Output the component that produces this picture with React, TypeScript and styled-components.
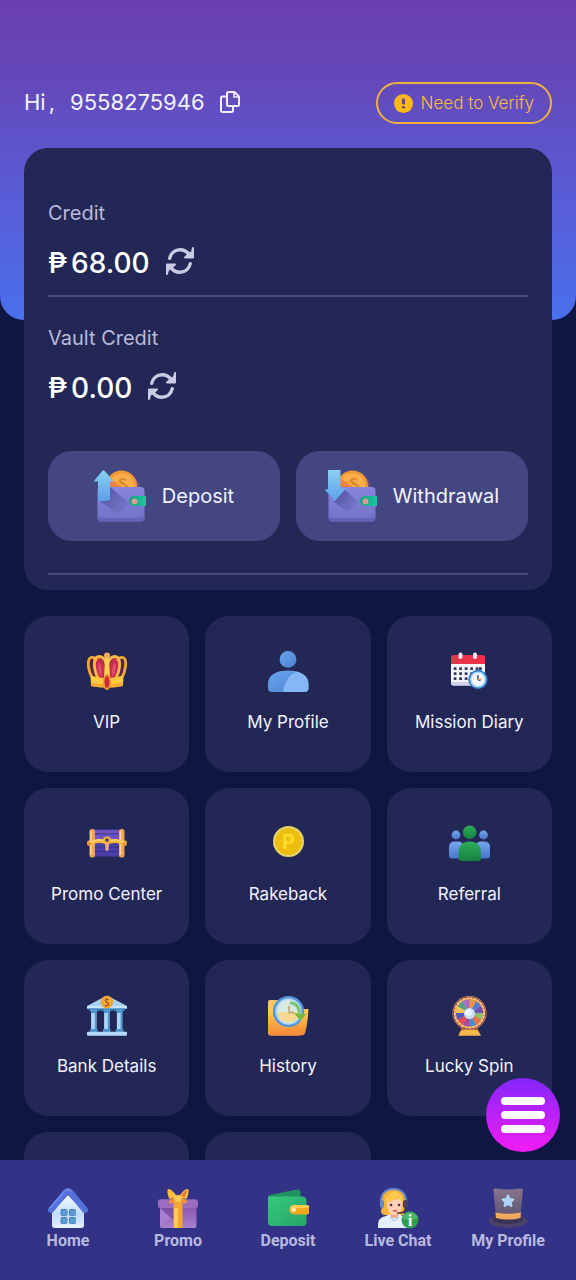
import React from "react";
import styled, { createGlobalStyle } from "styled-components";

const GlobalStyle = createGlobalStyle`
  * { box-sizing: border-box; }
  body {
    margin: 0;
    background: #101642;
    color: #f2f3fd;
    font-family: Inter, "Liberation Sans", sans-serif;
  }
  button { font: inherit; color: inherit; border: 0; background: none; padding: 0; cursor: pointer; }
  a { color: inherit; text-decoration: none; }
  svg { display: block; flex: none; overflow: visible; }
`;

const Shell = styled.div`
  display: flex;
  flex-direction: column;
  height: 100vh;
  position: relative;
`;

const Scroll = styled.main`
  flex: 1;
  min-height: 0;
  overflow-y: auto;
  scrollbar-width: none;
`;

const Hero = styled.header`
  display: flex;
  align-items: flex-start;
  justify-content: space-between;
  padding: 82px 24px 196px;
  border-radius: 0 0 24px 24px;
  background: linear-gradient(180deg, #6b3eb0 0%, #6449ba 26%, #5b59d2 55%, #4a70ec 100%);
`;

const Greeting = styled.div`
  display: flex;
  align-items: center;
  height: 40px;
  gap: 15px;
  font-size: 22px;
  line-height: 28px;
  white-space: nowrap;
`;

const Salutation = styled.span`
  display: flex;
  gap: 3px;
`;

const VerifyButton = styled.button`
  display: flex;
  align-items: center;
  gap: 8px;
  height: 42px;
  padding: 0 16px;
  border: 2px solid #f0b040;
  border-radius: 21px;
  color: #fcbc3c;
  font-size: 17px;
  font-weight: 300;
  line-height: 24px;
  white-space: nowrap;
`;

const Wallet = styled.section`
  position: relative;
  margin: -172px 24px 0;
  padding: 52px 24px 15px;
  border-radius: 24px;
  background: #232755;
`;

const Balance = styled.div`
  display: flex;
  flex-direction: column;
  gap: 16px;
`;

const BalanceLabel = styled.span`
  color: #b9badb;
  font-size: 20px;
  line-height: 26px;
`;

const Amount = styled.div`
  display: flex;
  align-items: center;
  gap: 16px;
  color: #ffffff;
  font-size: 28px;
  font-weight: 500;
  line-height: 42px;
`;

const Money = styled.span`
  display: flex;
  gap: 4px;
`;

const RefreshButton = styled.button`
  margin-bottom: 4px;
`;

const Rule = styled.hr<{ $after?: number }>`
  height: 2px;
  margin: 11px 0 ${(p) => p.$after ?? 0}px;
  border: 0;
  background: #464a7d;
`;

const Actions = styled.div`
  display: grid;
  grid-template-columns: 1fr 1fr;
  gap: 16px;
  margin: 42px 0 32px;
`;

const ActionButton = styled.button`
  display: flex;
  align-items: center;
  justify-content: center;
  gap: 16px;
  height: 90px;
  border-radius: 24px;
  background: #434681;
  font-size: 20px;
  line-height: 26px;
`;

const TileGrid = styled.nav`
  display: grid;
  grid-template-columns: repeat(3, 1fr);
  gap: 16px;
  padding: 26px 24px 24px;
`;

const Tile = styled.a`
  display: flex;
  flex-direction: column;
  align-items: center;
  gap: 19px;
  height: 156px;
  padding-top: 35px;
  border-radius: 24px;
  background: #232755;
  font-size: 17px;
  line-height: 24px;
  white-space: nowrap;
`;

const BottomNav = styled.nav`
  display: flex;
  height: 120px;
  padding: 28px 13px 0;
  background: #323386;
`;

const NavLink = styled.a`
  flex: 1;
  display: flex;
  flex-direction: column;
  align-items: center;
  gap: 3px;
  color: #b9b9e0;
  font-family: Roboto, sans-serif;
  font-size: 16px;
  font-weight: 700;
  line-height: 20px;
  white-space: nowrap;
`;

const MenuButton = styled.button`
  position: absolute;
  right: 16px;
  bottom: 128px;
  display: flex;
  flex-direction: column;
  align-items: center;
  justify-content: center;
  gap: 6px;
  width: 74px;
  height: 74px;
  border-radius: 50%;
  background: linear-gradient(180deg, #8426fb 0%, #f41cf4 100%);
`;

const Bar = styled.span`
  width: 44px;
  height: 8px;
  border-radius: 4px;
  background: #ffffff;
`;

const Icon40 = ({ children }: { children: React.ReactNode }) => (
  <svg width="40" height="40" viewBox="0 0 40 40" aria-hidden="true">{children}</svg>
);

const CopyIcon = () => (
  <svg width="20" height="22" viewBox="0 0 20 22" fill="none" stroke="#f1effc" strokeWidth="2" strokeLinejoin="round" aria-hidden="true">
    <path d="M8.500 1h6l4.500 4.500V13.500a1.500 1.500 0 0 1-1.500 1.500h-9A1.500 1.500 0 0 1 7 13.500V2.500A1.500 1.500 0 0 1 8.500 1Z" />
    <path d="M14 1.500V6h4.500" strokeWidth="1.600" />
    <path d="M7 5.500H2.500A1.500 1.500 0 0 0 1 7v12.500A1.500 1.500 0 0 0 2.500 21h9a1.500 1.500 0 0 0 1.500-1.500V15" />
  </svg>
);

const AlertIcon = () => (
  <svg width="19" height="19" viewBox="0 0 19 19" aria-hidden="true">
    <circle cx="9.500" cy="9.500" r="9.500" fill="#fdb913" />
    <rect x="8" y="4.500" width="3" height="6" rx="1" fill="#6a4a84" />
    <rect x="8" y="12" width="3" height="2.600" rx="1" fill="#6a4a84" />
  </svg>
);

const RefreshIcon = () => (
  <svg width="28" height="28" viewBox="0 0 28 28" fill="none" aria-hidden="true">
    <g stroke="#c9cae4" strokeWidth="3.400" strokeLinecap="round">
      <path d="M3.700 11.300C5 6 9 2.700 14 2.700c4 0 7 1.800 9 4.800" />
      <path d="M24.300 16.700C23 22 19 25.300 14 25.300c-4 0-7-1.800-9-4.800" />
    </g>
    <g fill="#c9cae4" stroke="#c9cae4" strokeWidth="2" strokeLinejoin="round">
      <path d="M27 1v9.500H19l4-3.500 3-2Z" />
      <path d="M1 27V17.500H9l-4 3.500-3 2Z" />
    </g>
  </svg>
);

const WalletIcon = ({ down }: { down?: boolean }) => {
  const id = down ? "wd" : "dp";
  return (
    <svg width="52" height="52" viewBox="0 0 52 52" aria-hidden="true">
      <defs>
        <linearGradient id={`${id}w`} x1="0" y1="0" x2="0" y2="1"><stop offset="0" stopColor="#8785dc" /><stop offset="1" stopColor="#7272c8" /></linearGradient>
        <linearGradient id={`${id}a`} x1="0" y1="0" x2="0" y2="1"><stop offset="0" stopColor="#8ad0f2" /><stop offset="1" stopColor="#5ba0e8" /></linearGradient>
        <linearGradient id={`${id}s`} x1="0" y1="0" x2="1" y2="1"><stop offset="0" stopColor="#41428c" stopOpacity=".9" /><stop offset="1" stopColor="#55559f" stopOpacity="0" /></linearGradient>
        <linearGradient id={`${id}g`} x1="0" y1="0" x2="1" y2="0"><stop offset="0" stopColor="#15a07c" /><stop offset="1" stopColor="#1cc79c" /></linearGradient>
      </defs>
      <path d="M38 6q7 2 7.500 12H36Z" fill="#7a4d83" />
      <circle cx="27.500" cy="16" r="15.500" fill="#f19a33" />
      <circle cx="27.500" cy="16" r="12.800" fill="#fbae49" />
      <path d="M15 8a15.500 15.500 0 0 0-2 10h17Z" fill="#ed7540" opacity=".8" />
      <path d="M32 10c-3-2-7-1-6 2s6 2 6 5M25 10l9 7" fill="none" stroke="#d98a2e" strokeWidth="1.600" />
      <rect x="3.500" y="17" width="47" height="34.500" rx="4" fill={`url(#${id}w)`} />
      <path d={down ? "M9 32 19 19 34 33l-12 9Z" : "M4 30 16 17 36 34l-12 10Z"} fill={`url(#${id}s)`} />
      <path d="M3.500 43q0 5 5 5h37q5 0 5-5v4.500a4 4 0 0 1-4 4h-39a4 4 0 0 1-4-4Z" fill="#6564b4" />
      <path d="M40 26h12v10H40a5 5 0 0 1 0-10Z" fill={`url(#${id}g)`} />
      <circle cx="40.500" cy="31.500" r="3" fill="#d99a96" />
      {down
        ? <path d="M3 0H15.500v18.500H21L10 31 0 20l3-1Z" fill={`url(#${id}a)`} />
        : <path d="M8.500 .8q1-1.200 2 0L19 10.500q.6 1-.6 1H16V30q-6 1.500-12 1V11.500H.8q-1.300 0-.5-1Z" fill={`url(#${id}a)`} />}
    </svg>
  );
};

const CrownIcon = () => (
  <Icon40>
    <path d="M5 27C0 19 0 10 3 8h34c3 2 3 11-2 19Z" fill="#5a2340" />
    <path d="M11 27C6 16 7 7 12 7c4 0 6 6 6.500 20Zm18 0C34 16 33 7 28 7c-4 0-6 6-6.500 20Z" fill="#c92c52" />
    <path d="M12 11c-2 5 0 11 2 15 2-5 1-11-2-15Zm16 0c2 5 0 11-2 15-2-5-1-11 2-15Z" fill="#e24a66" />
    <g fill="none" stroke="#f0a835" strokeWidth="2.800" strokeLinecap="round">
      <path d="M5.500 27C1 20-.5 8 4 6.500c2-.5 4 .5 5 2.500" />
      <path d="M34.500 27C39 20 40.500 8 36 6.500c-2-.5-4 .5-5 2.500" />
      <path d="M11 27C6 17 6 6 12 5.500c3.500 0 6 3 7 7" stroke="#f7bb45" />
      <path d="M29 27C34 17 34 6 28 5.500c-3.500 0-6 3-7 7" stroke="#f7bb45" />
    </g>
    <path d="M18 5h4l1 22h-6Z" fill="#ffcd50" />
    <circle cx="20" cy="4.500" r="3" fill="#edac5e" />
    <path d="M3.500 24.500q16.500 5 33 0l-.5 10.500q-16 3-32 0Z" fill="#fccb3d" />
    <path d="M4 31.500q16 4 32 0v3.500q-16 3-32 0Z" fill="#f5ab2f" />
    <ellipse cx="20" cy="31" rx="4" ry="8" fill="#e99b32" />
    <ellipse cx="20" cy="31" rx="2.500" ry="6" fill="#d02a38" />
  </Icon40>
);

const UserIcon = () => (
  <Icon40>
    <defs><linearGradient id="us" x1="0" y1="0" x2="1" y2="1"><stop offset="0" stopColor="#68a6ee" /><stop offset="1" stopColor="#4a80cc" /></linearGradient></defs>
    <circle cx="20" cy="8.400" r="8.400" fill="url(#us)" />
    <path d="M0 33C0 24 8 19.500 20 19.500S40.500 24 40.500 33v4q0 4-4 4H4q-4 0-4-4Z" fill="url(#us)" />
    <path d="M15 41c1-11 8-19 14-20.300C36 22.500 40.500 27 40.500 33v4q0 4-4 4Z" fill="#84b7f6" />
  </Icon40>
);

const CalendarIcon = () => (
  <Icon40>
    <rect x="2" y="10" width="34" height="24.500" rx="2.500" fill="#f5f6fc" />
    <path d="M2 13V6.500q0-2.500 2.500-2.500h29q2.500 0 2.500 2.500V13Z" fill="#e83349" />
    <path d="M2 31v1q0 2.500 2.500 2.500h29V31Z" fill="#cfd3ea" />
    {[17.500, 22.500, 27.500].map((y) => [6, 11.500, 17, 22.500, 28].map((x) => (
      <rect key={`${x}-${y}`} x={x - 1.300} y={y - 1.300} width="2.800" height="2.800" rx=".6" fill="#34385f" />
    )))}
    <rect x="30" y="16.200" width="2.800" height="2.800" fill="#34385f" />
    <rect x="9.500" y="1.500" width="4" height="6.500" rx="2" fill="#eceaf8" />
    <rect x="24" y="1.500" width="4" height="6.500" rx="2" fill="#eceaf8" />
    <circle cx="29" cy="28.500" r="9.700" fill="#2f7dc7" />
    <circle cx="29" cy="28.500" r="8" fill="#a9d7f8" />
    <circle cx="29" cy="28.500" r="6.500" fill="#f3f7ff" />
    <path d="M29 24v4.500l2.500 1" fill="none" stroke="#3c4468" strokeWidth="1.400" />
    <path d="m29 28.500 3.500-.5" stroke="#eea04a" strokeWidth="1.400" />
  </Icon40>
);

const ChestIcon = () => (
  <Icon40>
    <rect x="4" y="6.500" width="32" height="27" rx="2" fill="#4a3fa6" />
    <rect x="8" y="7" width="24" height="9" fill="#6f52c2" />
    <path d="M8 11h24M8 24h24M8 28.500h24" stroke="#373489" strokeWidth="1.200" />
    <rect x="2.500" y="6" width="5.500" height="28.500" rx="2.500" fill="#efa453" />
    <rect x="32" y="6" width="5.500" height="28.500" rx="2.500" fill="#efa453" />
    <path d="M4 8v24M33.500 8v24" stroke="#ffd59a" strokeWidth="1.500" />
    <path d="M2 19.500H6q3-2 7-1.500 7 1.500 14 0 4-.5 7 1.500h4" fill="none" stroke="#f4b53d" strokeWidth="4" strokeLinecap="round" />
    <path d="M3 18.500h3q3-2 7-1.500 7 1.500 14 0 4-.5 7 1.500h3" fill="none" stroke="#ffd879" strokeWidth="1.500" />
    <circle cx="2" cy="21" r="2" fill="#e7943c" /><circle cx="38" cy="21" r="2" fill="#e7943c" />
    <circle cx="20" cy="17.500" r="4" fill="#f4b53d" />
    <circle cx="20" cy="17" r="1.800" fill="#563873" />
    <path d="M18 20h4l-.5 7q-1.500 2-3 0Z" fill="#efac85" />
  </Icon40>
);

const CoinIcon = () => (
  <Icon40>
    <circle cx="20.500" cy="18.500" r="15.500" fill="#e5d36a" />
    <circle cx="20.500" cy="18.500" r="13.300" fill="#edbd10" />
    <text x="20.500" y="26" textAnchor="middle" fontFamily="Inter, sans-serif" fontSize="20" fontWeight="700" fill="#ffdc25">P</text>
  </Icon40>
);

const PeopleIcon = () => (
  <Icon40>
    <defs>
      <linearGradient id="pb" x1="0" y1="0" x2="0" y2="1"><stop offset="0" stopColor="#75a7ee" /><stop offset="1" stopColor="#4775cb" /></linearGradient>
      <linearGradient id="pg" x1="0" y1="0" x2="0" y2="1"><stop offset="0" stopColor="#2eae5a" /><stop offset="1" stopColor="#17803f" /></linearGradient>
    </defs>
    <g fill="url(#pb)">
      <circle cx="7" cy="12" r="4.400" /><circle cx="34.500" cy="12" r="4.400" />
      <path d="M0 24q0-5.500 6-5.500h4q4 0 4 5.500v11.500H3q-3 0-3-3Zm27 0q0-5.500 5-5.500h3q6 0 6 5.500v8.500q0 3-3 3H27Z" />
    </g>
    <circle cx="20.700" cy="9.200" r="6.700" fill="url(#pg)" />
    <path d="M9.500 30q0-11.500 11.200-11.500T32 30v5q0 3-3 3H12.500q-3 0-3-3Z" fill="url(#pg)" />
  </Icon40>
);

const BankIcon = () => (
  <Icon40>
    <path d="M18 1.500 0 11v2.500h40V11L22 1.500Q20 0 18 1.500Z" fill="#a9d3f6" />
    <path d="M0 11h40v2.500q-20 1-40 0Z" fill="#c8e5fb" />
    <path d="M2 13.500h36V16H2Z" fill="#2c72ad" />
    <circle cx="20" cy="7" r="6.300" fill="#f2a02d" /><circle cx="20" cy="7" r="4" fill="#f6b13e" />
    <path d="M21.500 4.800c-2-1.300-4 0-2.500 1.700s3.500 1.800 2 3.300-3 .3-3 .3" fill="none" stroke="#a04b1d" strokeWidth="1.400" />
    {[6.800, 19.800, 32.600].map((x) => (
      <g key={x}>
        <rect x={x - 2.700} y="17" width="5.400" height="18" fill="#abd8f8" />
        <rect x={x + 1} y="17" width="1.700" height="18" fill="#5795cd" />
        <path d={`M${x - 4.200} 13.500h8.400l-1.500 4.500h-5.400Z`} fill="#5196ce" />
        <rect x={x - 4} y="34" width="8" height="3" rx="1" fill="#4b8fc8" />
      </g>
    ))}
    <rect x="0" y="36.700" width="40" height="4" rx="1" fill="#b3daf8" />
  </Icon40>
);

const HistoryIcon = () => (
  <Icon40>
    <defs><linearGradient id="hf" x1="0" y1="0" x2="0" y2="1"><stop offset="0" stopColor="#ffce55" /><stop offset="1" stopColor="#f38738" /></linearGradient></defs>
    <path d="M0 7q0-2 2-2h9l3 5h17v30.500H3q-3 0-3-3Z" fill="#ffc85a" />
    <path d="M0 19q12-5 40.500-5-1 16-3.500 24-.8 2.500-4 2.500H3q-3 0-3-3Z" fill="url(#hf)" />
    <circle cx="20.500" cy="16.500" r="14" fill="#d8e9de" />
    <path d="M8 18q12-2 25 0a13 13 0 0 1-25 0Z" fill="#f4da91" />
    <circle cx="20.500" cy="16.500" r="14.300" fill="none" stroke="#5593db" strokeWidth="2.600" />
    <circle cx="20.500" cy="16.500" r="12.200" fill="none" stroke="#acd8f7" strokeWidth="1.600" />
    <path d="M21 11v6.500h5" fill="none" stroke="#bd9d68" strokeWidth="1.400" />
    <path d="M22 8c6 0 9 4 9.500 10" fill="none" stroke="#7bc579" strokeWidth="3" />
    <path d="m26 18 12 1-5.500 7Z" fill="#74bb40" />
  </Icon40>
);

const wheelColors = ["#f19541", "#547bd7", "#7250b0", "#8bc16b", "#ec6f4a", "#438fce", "#a54ba0", "#e04f55", "#5259bd", "#f2c552", "#52a28f", "#a96bc7"];
const WheelIcon = () => (
  <Icon40>
    <path d="M13 31h15l2 6H11Z" fill="#bc5726" />
    <path d="M11 37q1-2 3-2h13q2 0 3 2l2 3.800H9.300Z" fill="#f6b84a" />
    <circle cx="20.500" cy="18" r="17" fill="#ef9f58" />
    <circle cx="20.500" cy="18" r="16.200" fill="none" stroke="#804353" strokeWidth="1" />
    <circle cx="20.500" cy="18" r="14.800" fill="none" stroke="#ffe3ad" strokeWidth="1.400" strokeDasharray="1.500 2.200" />
    {wheelColors.map((c, i) => {
      const a = (i * Math.PI) / 6;
      const b = ((i + 1) * Math.PI) / 6;
      return <path key={c} fill={c} d={`M20.500 18L${20.5 + 13.500 * Math.sin(a)} ${18 - 13.500 * Math.cos(a)}A13.500 13.500 0 0 1 ${20.5 + 13.500 * Math.sin(b)} ${18 - 13.500 * Math.cos(b)}Z`} />;
    })}
    <circle cx="20.500" cy="18.500" r="5.500" fill="#c8ddf6" />
    <circle cx="19.500" cy="17.500" r="3.500" fill="#eaf3ff" />
  </Icon40>
);

const HomeIcon = () => (
  <Icon40>
    <defs><linearGradient id="hm" x1="0" y1="0" x2="0" y2="1"><stop offset="0" stopColor="#f5faff" /><stop offset=".6" stopColor="#bfdcff" /><stop offset="1" stopColor="#eaf2ff" /></linearGradient></defs>
    <path d="M20 7 4 24v13q0 3 3 3h26q3 0 3-3V24Z" fill="url(#hm)" />
    <path d="M3 22 17.500 4.500Q20 2 22.500 4.500L37 22" fill="none" stroke="#5471dc" strokeWidth="6" strokeLinecap="round" strokeLinejoin="round" />
    <path d="M2 20 17 3Q20 .5 23 3" fill="none" stroke="#708df0" strokeWidth="1.500" strokeLinecap="round" />
    {[[12.500, 21], [21, 21], [12.500, 29], [21, 29]].map(([x, y]) => (
      <g key={`${x}${y}`}><rect x={x} y={y} width="7" height="7" rx="2" fill="#427dbb" /><rect x={x + 1} y={y + 1} width="6" height="5.500" rx="1.500" fill="#5c9bd3" /></g>
    ))}
  </Icon40>
);

const GiftIcon = () => (
  <Icon40>
    <defs><linearGradient id="gf" x1="0" y1="0" x2="0" y2="1"><stop offset="0" stopColor="#8452a8" /><stop offset="1" stopColor="#a981cf" /></linearGradient></defs>
    <rect x="2" y="17" width="36.500" height="23" rx="2" fill="url(#gf)" />
    <path d="M2 20h22L15.500 32Z" fill="#6b4399" opacity=".5" />
    <path d="M2 20v19L13 30Z" fill="#a87cce" />
    <rect x="0" y="11.200" width="40" height="8.800" rx="2.500" fill="#9b6cc0" />
    <rect x="15.500" y="12" width="9" height="28" fill="#f3a632" />
    <rect x="16" y="20" width="4" height="20" fill="#ffcb55" />
    <path d="M19 9C16 3 10-1 9.500 2s1 7 2 9c2-1 5-1 8-1ZM21 9c3-6 9-10 9.500-7s-1 7-2 9c-2-1-5-1-8-1Z" fill="#ffbd3e" />
    <path d="M18 10c-4 0-7 2-7 4s3 1 4 1l4-3Zm4 0c4 0 7 2 7 4s-3 1-4 1l-4-3Z" fill="#f0963a" />
    <path d="M23 8q3-5 6-6l-2 7Z" fill="#e57c35" />
    <circle cx="20" cy="10.500" r="3.500" fill="#ffca58" />
  </Icon40>
);

const GreenWalletIcon = () => (
  <Icon40>
    <path d="M0 10Q0 7 4 6.500L29 1.500q3-.5 3.500 2.500V14H0Z" fill="#1f9460" />
    <defs><linearGradient id="gw" x1="0" y1="0" x2="1" y2="1"><stop offset="0" stopColor="#36c87c" /><stop offset="1" stopColor="#26a568" /></linearGradient></defs>
    <path d="M0 8.500h34q4.500 0 4.500 4.500v21q0 4-4 4H4q-4 0-4-4Z" fill="url(#gw)" />
    <path d="M26 17h13q2 0 2 2v5.500q0 2-2 2H26a4.750 4.750 0 0 1 0-9.500Z" fill="#f2a71d" />
    <path d="M26 17h13q2 0 2 2v1H22q1-3 4-3Z" fill="#ffca4e" />
    <circle cx="25.500" cy="21.500" r="2.600" fill="#ffe0a0" />
  </Icon40>
);

const AgentIcon = () => (
  <Icon40>
    <path d="M4 13C4 4 9 1 15 1s13 3 12 13l-1 13H6q-5-2-2-7Z" fill="#f5b436" />
    <path d="M3.500 18C1 7 7 1 15.500 1S30 7 27.500 18" fill="none" stroke="#6687d2" strokeWidth="2" />
    <path d="M0 40q-1-11 8-12l4-2h9l6 3q4 4 3 11Z" fill="#e6effb" />
    <rect x="12.500" y="23" width="8" height="7" rx="3" fill="#f1a988" />
    <path d="M9 12q8 1 13-3 2 3 2 7c0 7-3 11-7.500 11S9 22 9 16Z" fill="#ffd0b2" />
    <path d="M7 14q9 0 13-6 1 5 5 7 1-9-7-11T7 14Z" fill="#ffc94b" />
    <circle cx="13" cy="17" r="1.300" fill="#46324f" /><circle cx="21" cy="17" r="1.300" fill="#46324f" />
    <path d="M15 22.500q2 1 4 0" stroke="#cf5951" strokeWidth="1.500" fill="none" />
    <rect x="2" y="12" width="4" height="8" rx="2" fill="#6785ce" /><rect x="25" y="12" width="5" height="8" rx="2" fill="#50405a" />
    <path d="M28 19q0 6-6 6h-3" fill="none" stroke="#443950" strokeWidth="1.700" />
    <path d="m12 29 4 4 5-4" fill="none" stroke="#bbcee8" strokeWidth="1.500" />
    <circle cx="32" cy="32" r="8.500" fill="#2d9d51" /><path d="M24 30a8.500 8.500 0 0 1 16 0q-8 4-16 0Z" fill="#4bb568" />
    <text x="32" y="37.500" textAnchor="middle" fontFamily="Liberation Serif, serif" fontSize="17" fontWeight="700" fill="#f4fff6">i</text>
  </Icon40>
);

const HatIcon = () => (
  <Icon40>
    <defs><linearGradient id="ht" x1="0" y1="0" x2="0" y2="1"><stop offset="0" stopColor="#88758e" /><stop offset="1" stopColor="#59516f" /></linearGradient></defs>
    <ellipse cx="20" cy="33" rx="19.500" ry="6.800" fill="#4d426b" />
    <ellipse cx="20" cy="31.500" rx="15" ry="4.500" fill="#393354" />
    <path d="M5.500 2Q5.500 0 8 .5q12 2 24 0 3-.5 2.800 1.500L32.500 30Q20 33 8 30Z" fill="url(#ht)" />
    <path d="M7.400 24.500q12.500 2.500 25.500 0l-.4 5.500Q20 33 8 30Z" fill="#efaa5c" />
    <path d="m20 7.500 1.700 3.400 3.700.5-2.700 2.700.7 3.800-3.400-1.800-3.400 1.800.7-3.800-2.700-2.700 3.700-.5Z" fill="#afd4f7" stroke="#afd4f7" strokeWidth="2" strokeLinejoin="round" />
  </Icon40>
);

const tiles: [string, React.FC][] = [
  ["VIP", CrownIcon],
  ["My Profile", UserIcon],
  ["Mission Diary", CalendarIcon],
  ["Promo Center", ChestIcon],
  ["Rakeback", CoinIcon],
  ["Referral", PeopleIcon],
  ["Bank Details", BankIcon],
  ["History", HistoryIcon],
  ["Lucky Spin", WheelIcon],
];

const navItems: [string, React.FC][] = [
  ["Home", HomeIcon],
  ["Promo", GiftIcon],
  ["Deposit", GreenWalletIcon],
  ["Live Chat", AgentIcon],
  ["My Profile", HatIcon],
];

const BalanceRow = ({ label, value }: { label: string; value: string }) => (
  <Balance>
    <BalanceLabel>{label}</BalanceLabel>
    <Amount>
      <Money><span>₱</span><span>{value}</span></Money>
      <RefreshButton type="button"><RefreshIcon /></RefreshButton>
    </Amount>
  </Balance>
);

export default function App() {
  return (
    <Shell>
      <GlobalStyle />
      <Scroll>
        <Hero>
          <Greeting>
            <Salutation><span>Hi</span><span>,</span></Salutation>
            <span>9558275946</span>
            <button type="button"><CopyIcon /></button>
          </Greeting>
          <VerifyButton type="button"><AlertIcon />Need to Verify</VerifyButton>
        </Hero>
        <Wallet>
          <BalanceRow label="Credit" value="68.00" />
          <Rule $after={28} />
          <BalanceRow label="Vault Credit" value="0.00" />
          <Actions>
            <ActionButton type="button"><WalletIcon />Deposit</ActionButton>
            <ActionButton type="button"><WalletIcon down />Withdrawal</ActionButton>
          </Actions>
          <Rule />
        </Wallet>
        <TileGrid>
          {tiles.map(([label, Glyph]) => (
            <Tile key={label} href="#"><Glyph />{label}</Tile>
          ))}
          <Tile as="div" />
          <Tile as="div" />
        </TileGrid>
      </Scroll>
      <BottomNav>
        {navItems.map(([label, Glyph]) => (
          <NavLink key={label} href="#"><Glyph />{label}</NavLink>
        ))}
      </BottomNav>
      <MenuButton type="button"><Bar /><Bar /><Bar /></MenuButton>
    </Shell>
  );
}
